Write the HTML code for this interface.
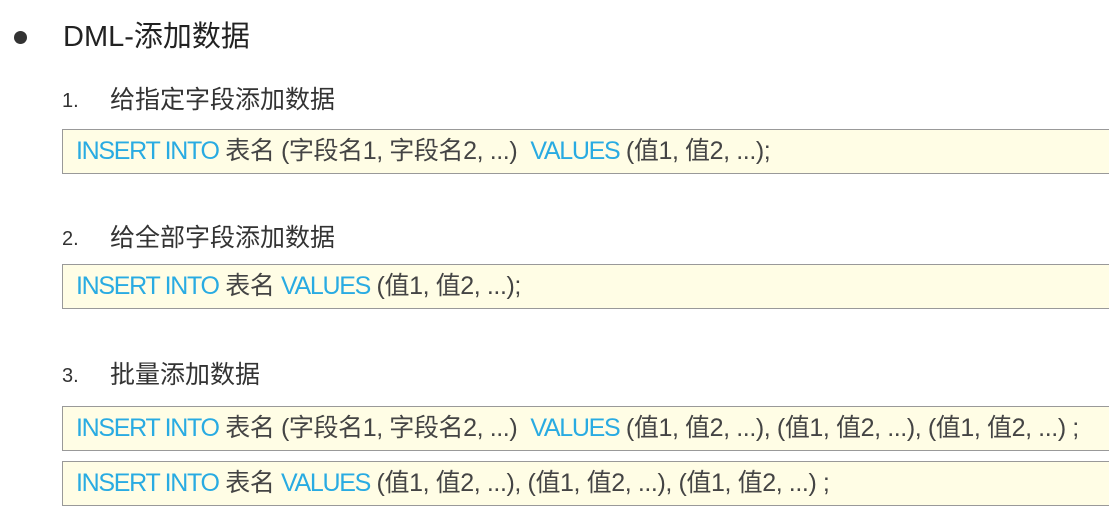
<!DOCTYPE html>
<html><head><meta charset="utf-8"><style>
body{margin:0;width:1109px;height:518px;background:#fff;overflow:hidden;position:relative;font-family:"Liberation Sans","Noto Sans CJK SC",sans-serif;color:#333}
.a{position:absolute;white-space:nowrap;line-height:30px}
.dot{position:absolute;left:14px;top:31px;width:13px;height:13px;border-radius:50%;background:#333}
.h{left:63px;top:22px;font-size:29px;color:#222}
.n{font-size:25px;color:#333}
.num{font-size:20px;color:#333}
.box{position:absolute;left:62px;width:1060px;height:45px;background:#fffde5;border:1px solid #999;box-sizing:border-box;font-size:25px;line-height:42px;padding-left:13px;white-space:nowrap;color:#444;letter-spacing:-0.4px}
.k{color:#29abe2;letter-spacing:-1.3px}
</style></head><body>
<div class="dot"></div>
<div class="a h">DML-添加数据</div>
<div class="a num" style="left:62px;top:86px">1.</div><div class="a n" style="left:110px;top:85px">给指定字段添加数据</div>
<div class="box" style="top:129px"><span class="k">INSERT INTO</span> 表名 (字段名1, 字段名2, ...)&nbsp; <span class="k">VALUES</span> (值1, 值2, ...);</div>
<div class="a num" style="left:62px;top:224px">2.</div><div class="a n" style="left:110px;top:223px">给全部字段添加数据</div>
<div class="box" style="top:264px"><span class="k">INSERT INTO</span> 表名 <span class="k">VALUES</span> (值1, 值2, ...);</div>
<div class="a num" style="left:62px;top:361px">3.</div><div class="a n" style="left:110px;top:360px">批量添加数据</div>
<div class="box" style="top:406px"><span class="k">INSERT INTO</span> 表名 (字段名1, 字段名2, ...)&nbsp; <span class="k">VALUES</span> (值1, 值2, ...), (值1, 值2, ...), (值1, 值2, ...) ;</div>
<div class="box" style="top:461px"><span class="k">INSERT INTO</span> 表名 <span class="k">VALUES</span> (值1, 值2, ...), (值1, 值2, ...), (值1, 值2, ...) ;</div>
</body></html>
